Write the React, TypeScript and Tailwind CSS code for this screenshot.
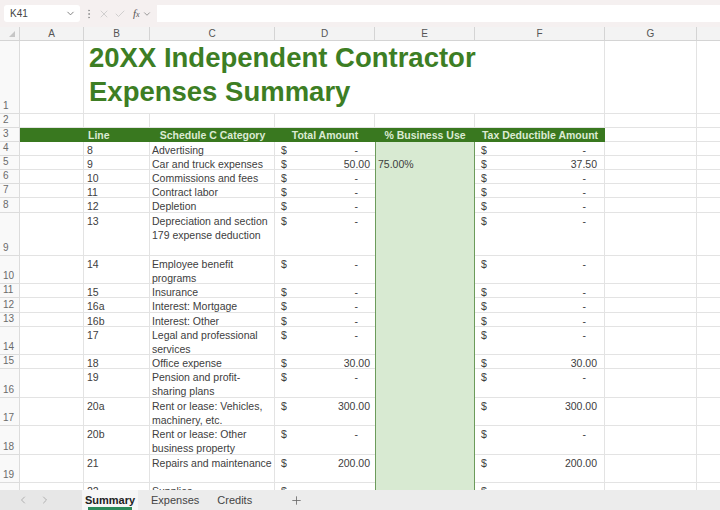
import { Check, ChevronDown, ChevronLeft, ChevronRight, EllipsisVertical, Plus, X } from 'lucide-react'

type DataRow = {
  n: number
  h: string
  line: string
  cat: string[]
  total: string
  pct?: string
  ded: string
}

const rows: DataRow[] = [
  { n: 4, h: 'h-[14px]', line: '8', cat: ['Advertising'], total: '-', ded: '-' },
  { n: 5, h: 'h-[14px]', line: '9', cat: ['Car and truck expenses'], total: '50.00', pct: '75.00%', ded: '37.50' },
  { n: 6, h: 'h-[14px]', line: '10', cat: ['Commissions and fees'], total: '-', ded: '-' },
  { n: 7, h: 'h-[14px]', line: '11', cat: ['Contract labor'], total: '-', ded: '-' },
  { n: 8, h: 'h-[15px]', line: '12', cat: ['Depletion'], total: '-', ded: '-' },
  { n: 9, h: 'h-[43px]', line: '13', cat: ['Depreciation and section', '179 expense deduction'], total: '-', ded: '-' },
  { n: 10, h: 'h-[28px]', line: '14', cat: ['Employee benefit', 'programs'], total: '-', ded: '-' },
  { n: 11, h: 'h-[14px]', line: '15', cat: ['Insurance'], total: '-', ded: '-' },
  { n: 12, h: 'h-[15px]', line: '16a', cat: ['Interest: Mortgage'], total: '-', ded: '-' },
  { n: 13, h: 'h-[14px]', line: '16b', cat: ['Interest: Other'], total: '-', ded: '-' },
  { n: 14, h: 'h-[28px]', line: '17', cat: ['Legal and professional', 'services'], total: '-', ded: '-' },
  { n: 15, h: 'h-[14px]', line: '18', cat: ['Office expense'], total: '30.00', ded: '30.00' },
  { n: 16, h: 'h-[29px]', line: '19', cat: ['Pension and profit-', 'sharing plans'], total: '-', ded: '-' },
  { n: 17, h: 'h-[28px]', line: '20a', cat: ['Rent or lease: Vehicles,', 'machinery, etc.'], total: '300.00', ded: '300.00' },
  { n: 18, h: 'h-[29px]', line: '20b', cat: ['Rent or lease: Other', 'business property'], total: '-', ded: '-' },
  { n: 19, h: 'h-[28px]', line: '21', cat: ['Repairs and maintenance'], total: '200.00', ded: '200.00' },
  { n: 20, h: 'h-[28px]', line: '22', cat: ['Supplies'], total: '-', ded: '-' },
]

const cell = 'border-r border-b border-[#e3e3e3]'

function RowNum({ n }: { n: number }) {
  return (
    <div className="w-[20px] shrink-0 flex items-end pl-[3px] border-r border-b border-[#dcdcdc] bg-[#f9f9f9] text-[10px] leading-[14px] text-[#6b6b6b]">
      {n}
    </div>
  )
}

function Money({ value, dash }: { value: string; dash: string }) {
  return (
    <div className="flex justify-between">
      <span>$</span>
      <span className={value === '-' ? dash : ''}>{value}</span>
    </div>
  )
}

export default function App() {
  return (
    <div className="w-[720px] h-[510px] flex flex-col overflow-hidden bg-white font-['Liberation_Sans',Arial,sans-serif] text-[#404040]">
      {/* Formula bar */}
      <div className="h-[27px] shrink-0 flex items-center bg-[#f5f0f0] pl-[4px]">
        <div className="w-[76px] h-[17px] bg-white rounded-[3px] flex items-center justify-between pl-[6px] pr-[4px] text-[10px] text-[#444]">
          <span>K41</span>
          <ChevronDown size={11} className="text-[#777]" />
        </div>
        <EllipsisVertical size={12} className="ml-[3px] text-[#999]" />
        <div className="flex items-center gap-[4px] ml-[3px] text-[#c4c4c4]">
          <X size={12} strokeWidth={1.5} />
          <Check size={12} strokeWidth={1.5} />
        </div>
        <span className="ml-[7px] text-[11px] italic font-['Liberation_Serif',serif] text-[#555]">
          f<span className="text-[8px]">x</span>
        </span>
        <ChevronDown size={10} className="ml-[2px] text-[#888]" />
        <div className="flex-1 h-[17px] bg-white ml-[5px]" />
      </div>

      {/* Column headers */}
      <div className="h-[14px] shrink-0 flex bg-[#f3f3f3] border-b border-[#d4d4d4] text-[10px] leading-[13px] text-[#555]">
        <div className="w-[20px] shrink-0 border-r border-[#d4d4d4] flex items-end justify-end pr-[4px] pb-[3px]">
          <svg width="6" height="6" viewBox="0 0 6 6">
            <polygon points="6,0 6,6 0,6" fill="#c6c6c6" />
          </svg>
        </div>
        <div className="w-[64px] shrink-0 border-r border-[#d4d4d4] text-center">A</div>
        <div className="w-[66px] shrink-0 border-r border-[#d4d4d4] text-center">B</div>
        <div className="w-[125px] shrink-0 border-r border-[#d4d4d4] text-center">C</div>
        <div className="w-[100px] shrink-0 border-r border-[#d4d4d4] text-center">D</div>
        <div className="w-[100px] shrink-0 border-r border-[#d4d4d4] text-center">E</div>
        <div className="w-[130px] shrink-0 border-r border-[#d4d4d4] text-center">F</div>
        <div className="w-[92px] shrink-0 border-r border-[#d4d4d4] text-center">G</div>
        <div className="flex-1" />
      </div>

      {/* Grid */}
      <div className="flex-1 overflow-hidden text-[10.5px] leading-[14px]">
        {/* Row 1: title */}
        <div className="h-[73px] flex">
          <RowNum n={1} />
          <div className={`w-[64px] shrink-0 ${cell}`} />
          <div className={`w-[521px] shrink-0 ${cell} pl-[5px] font-bold text-[27.5px] leading-[34px] text-[#3d7e24]`}>
            20XX Independent Contractor
            <br />
            Expenses Summary
          </div>
          <div className={`w-[92px] shrink-0 ${cell}`} />
          <div className="flex-1 border-b border-[#e3e3e3]" />
        </div>

        {/* Row 2 */}
        <div className="h-[14px] flex">
          <RowNum n={2} />
          <div className={`w-[64px] shrink-0 ${cell}`} />
          <div className={`w-[66px] shrink-0 ${cell}`} />
          <div className={`w-[125px] shrink-0 ${cell}`} />
          <div className={`w-[100px] shrink-0 ${cell}`} />
          <div className={`w-[100px] shrink-0 ${cell}`} />
          <div className={`w-[130px] shrink-0 ${cell}`} />
          <div className={`w-[92px] shrink-0 ${cell}`} />
          <div className="flex-1 border-b border-[#e3e3e3]" />
        </div>

        {/* Row 3: table header */}
        <div className="h-[14px] flex">
          <RowNum n={3} />
          <div className="w-[585px] shrink-0 flex bg-[#39781f] font-bold text-[#dcebd3] leading-[14px]">
            <div className="w-[64px] shrink-0" />
            <div className="w-[66px] shrink-0 pl-[4px]">Line</div>
            <div className="w-[125px] shrink-0 text-center">Schedule C Category</div>
            <div className="w-[100px] shrink-0 text-center">Total Amount</div>
            <div className="w-[100px] shrink-0 text-center">% Business Use</div>
            <div className="w-[130px] shrink-0 text-center">Tax Deductible Amount</div>
          </div>
          <div className={`w-[92px] shrink-0 ${cell}`} />
          <div className="flex-1 border-b border-[#e3e3e3]" />
        </div>

        {rows.map((r) => (
          <div key={r.n} className={`${r.h} flex`}>
            <RowNum n={r.n} />
            <div className={`w-[64px] shrink-0 ${cell}`} />
            <div className={`w-[66px] shrink-0 ${cell} pl-[3px] pt-[1px]`}>{r.line}</div>
            <div className={`w-[125px] shrink-0 ${cell} pl-[2px] pt-[1px] whitespace-nowrap`}>
              {r.cat.map((c) => (
                <div key={c}>{c}</div>
              ))}
            </div>
            <div className="w-[100px] shrink-0 border-b border-[#e3e3e3] pl-[6px] pr-[5px] pt-[1px]">
              <Money value={r.total} dash="mr-[12px]" />
            </div>
            <div className="w-[100px] shrink-0 bg-[#d8ead2] border-x border-[#6c9b5b] pl-[2px] pt-[1px]">
              {r.pct}
            </div>
            <div className={`w-[130px] shrink-0 ${cell} pl-[6px] pr-[7px] pt-[1px]`}>
              <Money value={r.ded} dash="mr-[11px]" />
            </div>
            <div className={`w-[92px] shrink-0 ${cell}`} />
            <div className="flex-1 border-b border-[#e3e3e3]" />
          </div>
        ))}
      </div>

      {/* Sheet tabs */}
      <div className="h-[20px] shrink-0 flex items-stretch bg-[#ececec] text-[11px]">
        <div className="w-[82px] shrink-0 flex items-center gap-[10px] pl-[17px] bg-[#e7e7e7] text-[#b0b0b0]">
          <ChevronLeft size={12} />
          <ChevronRight size={12} />
        </div>
        <div className="w-[56px] shrink-0 flex flex-col items-center justify-center bg-[#f6f6f6] relative">
          <span className="text-[#222] font-semibold">Summary</span>
          <div className="absolute bottom-0 left-[6px] right-[6px] h-[3px] bg-[#2a8a5a]" />
        </div>
        <div className="flex items-center pl-[13px] text-[#444]">Expenses</div>
        <div className="flex items-center pl-[18px] text-[#444]">Credits</div>
        <div className="flex items-center pl-[38px] text-[#666]">
          <Plus size={13} strokeWidth={1.5} />
        </div>
      </div>
    </div>
  )
}
